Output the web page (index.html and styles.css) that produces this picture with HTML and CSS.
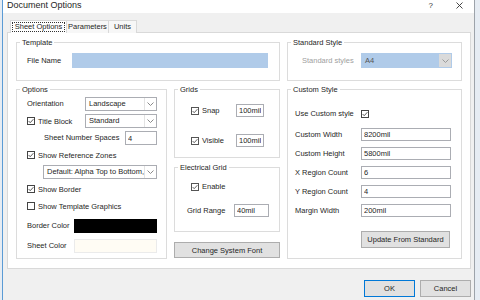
FILE: index.html
```html
<!DOCTYPE html>
<html lang="en">
  <head>
    <meta charset="UTF-8" />
    <title>Document Options</title>
    <link rel="stylesheet" href="styles.css">
  </head>
  <body>
    <div class="dialog">
      <div class="titlebar">
        <span class="title">Document Options</span>
        <span class="help">?</span>
        <svg class="close" width="7" height="7" viewBox="0 0 7 7">
          <path d="M0.5 0.5 6.5 6.5 M6.5 0.5 0.5 6.5" stroke="#333" stroke-width="0.9" fill="none" />
        </svg>
      </div>

      <div class="body">
        <div class="tabs">
          <span class="tab active tab-sheet"><span class="focus">Sheet Options</span></span>
          <span class="tab tab-params">Parameters</span>
          <span class="tab tab-units">Units</span>
        </div>

        <div class="panel">
          <div class="layout">
            <fieldset class="group">
              <legend>Template</legend>
              <div class="single-row template-row">
                <span class="lbl w45">File Name</span>
                <div class="field filename"></div>
              </div>
            </fieldset>

            <fieldset class="group">
              <legend>Standard Style</legend>
              <div class="single-row standard-row">
                <span class="lbl w59 disabled">Standard styles</span>
                <div class="combo combo-disabled w91">
                  <span class="value">A4</span>
                  <span class="arrow">
                    <svg width="7" height="4" viewBox="0 0 7 4"><path d="M0.5 0.5 3.5 3.5 6.5 0.5" stroke="#9a9a9a" fill="none" /></svg>
                  </span>
                </div>
              </div>
            </fieldset>

            <div class="left-col">
              <fieldset class="group">
                <legend>Options</legend>
                <div class="options-body">
                  <div class="opt-row">
                    <span class="lbl w58">Orientation</span>
                    <div class="combo w72">
                      <span class="value">Landscape</span>
                      <span class="arrow">
                        <svg width="7" height="4" viewBox="0 0 7 4"><path d="M0.5 0.5 3.5 3.5 6.5 0.5" stroke="#8a8a8a" fill="none" /></svg>
                      </span>
                    </div>
                  </div>
                  <div class="opt-row">
                    <span class="check w58">
                      <svg class="cb" width="8" height="8" viewBox="0 0 8 8"><rect x="0.5" y="0.5" width="7" height="7" fill="#fff" stroke="#444" /><path d="M1.6 4 3.2 5.7 6.4 2.2" fill="none" stroke="#444" stroke-width="0.9" /></svg>
                      Title Block
                    </span>
                    <div class="combo w72">
                      <span class="value">Standard</span>
                      <span class="arrow">
                        <svg width="7" height="4" viewBox="0 0 7 4"><path d="M0.5 0.5 3.5 3.5 6.5 0.5" stroke="#8a8a8a" fill="none" /></svg>
                      </span>
                    </div>
                  </div>
                  <div class="opt-row indent17">
                    <span class="lbl w81">Sheet Number Spaces</span>
                    <input class="field w32" type="text" value="4" />
                  </div>
                  <div class="opt-row">
                    <span class="check">
                      <svg class="cb" width="8" height="8" viewBox="0 0 8 8"><rect x="0.5" y="0.5" width="7" height="7" fill="#fff" stroke="#444" /><path d="M1.6 4 3.2 5.7 6.4 2.2" fill="none" stroke="#444" stroke-width="0.9" /></svg>
                      Show Reference Zones
                    </span>
                  </div>
                  <div class="opt-row indent16">
                    <div class="combo w115">
                      <span class="value">Default: Alpha Top to Bottom,</span>
                      <span class="arrow">
                        <svg width="7" height="4" viewBox="0 0 7 4"><path d="M0.5 0.5 3.5 3.5 6.5 0.5" stroke="#8a8a8a" fill="none" /></svg>
                      </span>
                    </div>
                  </div>
                  <div class="opt-row">
                    <span class="check">
                      <svg class="cb" width="8" height="8" viewBox="0 0 8 8"><rect x="0.5" y="0.5" width="7" height="7" fill="#fff" stroke="#444" /><path d="M1.6 4 3.2 5.7 6.4 2.2" fill="none" stroke="#444" stroke-width="0.9" /></svg>
                      Show Border
                    </span>
                  </div>
                  <div class="opt-row">
                    <span class="check">
                      <svg class="cb" width="8" height="8" viewBox="0 0 8 8"><rect x="0.5" y="0.5" width="7" height="7" fill="#fff" stroke="#444" /></svg>
                      Show Template Graphics
                    </span>
                  </div>
                  <div class="opt-row color-row">
                    <span class="lbl w47">Border Color</span>
                    <div class="swatch swatch-black"></div>
                  </div>
                  <div class="opt-row color-row">
                    <span class="lbl w47">Sheet Color</span>
                    <div class="swatch swatch-sheet"></div>
                  </div>
                </div>
              </fieldset>

              <div class="middle-col">
                <fieldset class="group">
                  <legend>Grids</legend>
                  <div class="grids-body">
                    <div class="grid-row">
                      <span class="check w45">
                        <svg class="cb" width="8" height="8" viewBox="0 0 8 8"><rect x="0.5" y="0.5" width="7" height="7" fill="#fff" stroke="#555" /><path d="M1.6 4 3.2 5.7 6.4 2.2" fill="none" stroke="#555" stroke-width="0.9" /></svg>
                        Snap
                      </span>
                      <input class="field w28" type="text" value="100mil" />
                    </div>
                    <div class="grid-row">
                      <span class="check w45">
                        <svg class="cb" width="8" height="8" viewBox="0 0 8 8"><rect x="0.5" y="0.5" width="7" height="7" fill="#fff" stroke="#555" /><path d="M1.6 4 3.2 5.7 6.4 2.2" fill="none" stroke="#555" stroke-width="0.9" /></svg>
                        Visible
                      </span>
                      <input class="field w28" type="text" value="100mil" />
                    </div>
                  </div>
                </fieldset>

                <fieldset class="group">
                  <legend>Electrical Grid</legend>
                  <div class="elec-body">
                    <div class="grid-row indent16">
                      <span class="check">
                        <svg class="cb" width="8" height="8" viewBox="0 0 8 8"><rect x="0.5" y="0.5" width="7" height="7" fill="#fff" stroke="#555" /><path d="M1.6 4 3.2 5.7 6.4 2.2" fill="none" stroke="#555" stroke-width="0.9" /></svg>
                        Enable
                      </span>
                    </div>
                    <div class="grid-row indent12">
                      <span class="lbl w47">Grid Range</span>
                      <input class="field w35" type="text" value="40mil" />
                    </div>
                  </div>
                </fieldset>

                <button class="btn font-btn" type="button">Change System Font</button>
              </div>
            </div>

            <fieldset class="group">
              <legend>Custom Style</legend>
              <div class="custom-body">
                <div class="cs-row">
                  <span class="lbl w66">Use Custom style</span>
                  <svg class="cb" width="8" height="8" viewBox="0 0 8 8"><rect x="0.5" y="0.5" width="7" height="7" fill="#fff" stroke="#444" /><path d="M1.6 4 3.2 5.7 6.4 2.2" fill="none" stroke="#444" stroke-width="0.9" /></svg>
                </div>
                <div class="cs-row first-field">
                  <span class="lbl w66">Custom Width</span>
                  <input class="field w90" type="text" value="8200mil" />
                </div>
                <div class="cs-row">
                  <span class="lbl w66">Custom Height</span>
                  <input class="field w90" type="text" value="5800mil" />
                </div>
                <div class="cs-row">
                  <span class="lbl w66">X Region Count</span>
                  <input class="field w90" type="text" value="6" />
                </div>
                <div class="cs-row">
                  <span class="lbl w66">Y Region Count</span>
                  <input class="field w90" type="text" value="4" />
                </div>
                <div class="cs-row">
                  <span class="lbl w66">Margin Width</span>
                  <input class="field w90" type="text" value="200mil" />
                </div>
                <div class="cs-button">
                  <button class="btn update-btn" type="button">Update From Standard</button>
                </div>
              </div>
            </fieldset>
          </div>
        </div>

        <div class="footer">
          <button class="btn dlg-btn default" type="button">OK</button>
          <button class="btn dlg-btn" type="button">Cancel</button>
        </div>
      </div>
    </div>
  </body>
</html>
```

FILE: styles.css
```css
:root {
  --dialog-bg: #f0f0f0;
  --group-border: #dcdcdc;
  --field-border: #abadb3;
  --btn-bg: #e1e1e1;
  --btn-border: #adadad;
  --accent: #0078d7;
  --text: #262626;
}

* {
  box-sizing: border-box;
}

body {
  margin: 0;
  background-color: #e6ecf3;
  font-family: "Liberation Sans", Arial, sans-serif;
  font-size: 7.5px;
  color: var(--text);
  overflow: hidden;
}

.dialog {
  margin-left: 2px;
  width: 473px;
  height: 300px;
  background: var(--dialog-bg);
  border-left: 1px solid #5b9bd5;
  border-right: 1px solid #9da3aa;
}

/* title bar */
.titlebar {
  display: flex;
  align-items: flex-start;
  height: 13px;
  padding: 0 11px 0 4px;
  background: #fff;
}

.title {
  font-size: 9px;
  line-height: 11px;
}

.help {
  margin-left: auto;
  margin-right: 23px;
  font-size: 8px;
  line-height: 11px;
  color: #333;
}

.close {
  margin-top: 2px;
}

.body {
  padding: 0 3px 0 4px;
}

/* tabs */
.tabs {
  display: flex;
  padding-top: 7px;
  padding-left: 3px;
  margin-bottom: -1px;
}

.tab {
  height: 13px;
  line-height: 11px;
  text-align: center;
  border: 1px solid #d9d9d9;
  border-bottom: none;
  background: #f7f7f7;
  margin-right: -1px;
}

.tab.active {
  position: relative;
  z-index: 1;
  background: #fff;
}

.tab-sheet {
  width: 57px;
  padding: 1px;
}

.tab-sheet .focus {
  display: block;
  height: 10px;
  line-height: 8px;
  border: 1px dotted #333;
}

.tab-params {
  width: 43px;
}

.tab-units {
  width: 29px;
}

.panel {
  background: #fff;
  border: 1px solid #d9d9d9;
  padding: 5px 8px 9px 8px;
}

.layout {
  display: grid;
  grid-template-columns: 264px 175px;
  column-gap: 7px;
  row-gap: 4px;
}

/* group boxes */
.group {
  margin: 0;
  padding: 0;
  min-width: 0;
  border: 1px solid var(--group-border);
}

.group legend {
  margin-left: 3px;
  padding: 0 2px;
  line-height: 9px;
  font-size: 7.5px;
}

.lbl {
  white-space: nowrap;
  line-height: 10px;
}

.lbl.disabled {
  color: #a0a0a0;
}

.w28 { width: 28px; }
.w32 { width: 32px; }
.w35 { width: 35px; }
.w45 { width: 45px; }
.w47 { width: 47px; }
.w58 { width: 58px; }
.w59 { width: 59px; }
.w66 { width: 66px; }
.w72 { width: 72px; }
.w81 { width: 81px; }
.w90 { width: 90px; }
.w91 { width: 91px; }
.w115 { width: 115px; }

.indent12 { padding-left: 12px; }
.indent16 { padding-left: 16px; }
.indent17 { padding-left: 17px; }

.single-row {
  display: flex;
  align-items: center;
  padding-top: 6px;
  padding-bottom: 12px;
}

.template-row {
  padding-left: 10px;
}

.standard-row {
  padding-left: 14px;
}

.field {
  display: block;
  height: 13px;
  margin: 0;
  padding: 0 2px;
  border: 1px solid var(--field-border);
  background: #fff;
  font-family: inherit;
  font-size: 7.5px;
  color: var(--text);
  outline: none;
}

.filename {
  width: 196px;
  height: 15px;
  background: #b0cbe9;
  border-color: #b0cbe9;
}

/* combo boxes */
.combo {
  display: flex;
  height: 14px;
  border: 1px solid var(--field-border);
  background: #fff;
}

.combo .value {
  flex: 1;
  padding-left: 3px;
  line-height: 12px;
  white-space: nowrap;
  overflow: hidden;
}

.combo .arrow {
  display: flex;
  align-items: center;
  justify-content: center;
  width: 12px;
  border-left: 1px solid #e3e3e3;
}

.combo-disabled {
  height: 15px;
  background: #b0cbe9;
  border-color: #b0cbe9;
}

.combo-disabled .value {
  color: #555;
  line-height: 13px;
}

.combo-disabled .arrow {
  background: #dadada;
  border-left: none;
}

/* checkboxes */
.check {
  display: flex;
  align-items: center;
  gap: 3px;
  white-space: nowrap;
}

.cb {
  display: block;
  flex-shrink: 0;
}

/* options */
.left-col {
  display: grid;
  grid-template-columns: 151px 106px;
  column-gap: 7px;
}

.options-body {
  display: flex;
  flex-direction: column;
  gap: 3px;
  padding: 3px 9px 5px 10px;
}

.opt-row {
  display: flex;
  align-items: center;
  height: 14px;
}

.opt-row .field {
  height: 14px;
}

.color-row {
  margin-top: 3px;
}

.swatch {
  width: 84px;
  height: 14px;
}

.swatch-black {
  background: #000;
  border: 1px solid #000;
}

.swatch-sheet {
  background: #fffcf4;
  border: 1px solid #ebebeb;
}

/* middle column */
.middle-col {
  display: flex;
  flex-direction: column;
}

.grids-body {
  display: flex;
  flex-direction: column;
  gap: 17px;
  padding: 10px 0 10px 16px;
}

.grid-row {
  display: flex;
  align-items: center;
  height: 13px;
}

.middle-col .group + .group {
  margin-top: 5px;
}

.elec-body {
  display: flex;
  flex-direction: column;
  gap: 11px;
  padding: 8px 0 14px 0;
}

/* buttons */
.btn {
  display: block;
  margin: 0;
  padding: 0;
  background: var(--btn-bg);
  border: 1px solid var(--btn-border);
  font-family: inherit;
  font-size: 7.5px;
  color: var(--text);
}

.font-btn {
  margin-top: 10px;
  width: 106px;
  height: 16px;
}

/* custom style */
.custom-body {
  display: flex;
  flex-direction: column;
  gap: 6px;
  padding: 13px 0 9px 7px;
}

.cs-row {
  display: flex;
  align-items: center;
  height: 13px;
}

.cs-row.first-field {
  margin-top: 2px;
}

.cs-button {
  margin-top: 8px;
  padding-left: 66px;
}

.update-btn {
  width: 89px;
  height: 17px;
}

/* dialog buttons */
.footer {
  display: flex;
  justify-content: flex-end;
  gap: 5px;
  margin-top: 11px;
}

.dlg-btn {
  width: 51px;
  height: 17px;
}

.dlg-btn.default {
  border-color: var(--accent);
}
```
